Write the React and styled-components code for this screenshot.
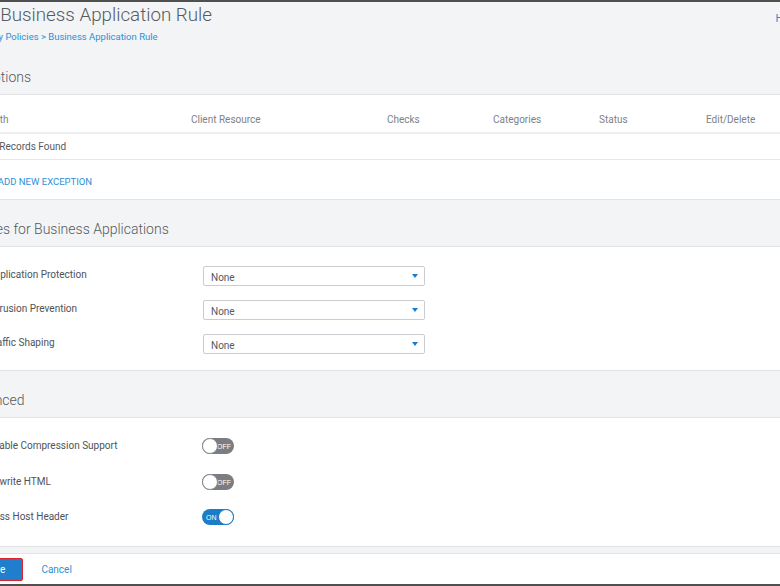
import React from "react";
import styled, { createGlobalStyle } from "styled-components";

const GlobalStyle = createGlobalStyle`
  html, body {
    margin: 0;
    padding: 0;
    background: #f3f4f6;
    font-family: Roboto, "Liberation Sans", Arial, sans-serif;
  }
`;

const columns = ["Path", "Client Resource", "Checks", "Categories", "Status", "Edit/Delete"];

const profiles = ["Application Protection", "Intrusion Prevention", "Traffic Shaping"];

const advanced = [
  { label: "Enable Compression Support", on: false },
  { label: "Rewrite HTML", on: false },
  { label: "Pass Host Header", on: true },
];

function Toggle({ on }) {
  return (
    <Switch $on={on}>
      <SwitchText $on={on}>{on ? "ON" : "OFF"}</SwitchText>
      <Knob $on={on} />
    </Switch>
  );
}

export default function App() {
  return (
    <Page>
      <GlobalStyle />
      <Main>
        <Header>
          <TitleBlock>
            <Title>Add Business Application Rule</Title>
            <Crumbs>Security Policies &gt; Business Application Rule</Crumbs>
          </TitleBlock>
          <HelpLink>Help</HelpLink>
        </Header>

        <SectionHeader>Exceptions</SectionHeader>
        <Card>
          <TableRow $head>
            {columns.map((c) => (
              <Cell key={c}>{c}</Cell>
            ))}
          </TableRow>
          <TableRow>
            <Cell>No Records Found</Cell>
          </TableRow>
          <AddLink>+ ADD NEW EXCEPTION</AddLink>
        </Card>

        <SectionHeader>Profiles for Business Applications</SectionHeader>
        <FormCard>
          {profiles.map((p) => (
            <FormRow key={p}>
              <Label>{p}</Label>
              <Select>
                <span>None</span>
                <Caret />
              </Select>
            </FormRow>
          ))}
        </FormCard>

        <SectionHeader>Advanced</SectionHeader>
        <FormCard $toggles>
          {advanced.map((a) => (
            <FormRow key={a.label} $short>
              <Label $centered>{a.label}</Label>
              <Toggle on={a.on} />
            </FormRow>
          ))}
        </FormCard>

        <Footer>
          <SaveButton>Save</SaveButton>
          <CancelLink>Cancel</CancelLink>
        </Footer>
      </Main>
    </Page>
  );
}

const Page = styled.div`
  height: 586px;
  box-sizing: border-box;
  border-top: 2px solid #505050;
  border-bottom: 2px solid #505050;
  overflow: hidden;
  background: #f3f4f6;
`;

const Main = styled.div`
  margin-left: -40px;
  margin-right: -20px;
  display: flex;
  flex-direction: column;
`;

const Header = styled.div`
  display: flex;
  justify-content: space-between;
  align-items: flex-start;
  padding: 2px 2px 4px 0;
`;

const TitleBlock = styled.div`
  display: flex;
  flex-direction: column;
  gap: 4px;
`;

const Title = styled.div`
  font-size: 18.8px;
  line-height: 22px;
  font-weight: 300;
  color: #555b61;
  margin-left: 3px;
`;

const Crumbs = styled.div`
  font-size: 9.5px;
  line-height: 14px;
  color: #2d8fd5;
  margin-left: 9px;
`;

const HelpLink = styled.div`
  font-size: 11px;
  line-height: 14px;
  margin-top: 8px;
  color: #2d8fd5;
`;

const SectionHeader = styled.div`
  padding: 19px 0 7px 4px;
  font-size: 14px;
  line-height: 20px;
  font-weight: 300;
  color: #555a60;
  border-bottom: 1px solid #e1e3e6;
`;

const Card = styled.div`
  background: #fff;
  padding-left: 28px;
  border-bottom: 1px solid #e1e3e6;
`;

const TableRow = styled.div`
  display: grid;
  grid-template-columns: 203px 196px 106px 106px 107px 1fr;
  font-size: 10px;
  line-height: 14px;
  color: ${(p) => (p.$head ? "#7d8287" : "#555a5f")};
  padding: ${(p) => (p.$head ? "18px 0 5px" : "6px 0 5px")};
  border-bottom: ${(p) => (p.$head ? "2px solid #eceef0" : "1px solid #e4e6e8")};
  margin-left: -28px;
  padding-left: ${(p) => (p.$head ? "28px" : "24px")};
`;

const Cell = styled.div`
  white-space: nowrap;
`;

const AddLink = styled.div`
  font-size: 9.5px;
  line-height: 14px;
  color: #2d8fd5;
  padding: 15px 0 10px;
  margin-left: 2px;
`;

const FormCard = styled.div`
  background: #fff;
  padding: ${(p) => (p.$toggles ? "20px 0 21px 28px" : "19px 0 16px 28px")};
  border-bottom: 1px solid #e1e3e6;
  display: flex;
  flex-direction: column;
  gap: ${(p) => (p.$toggles ? "19.5px" : "14px")};
`;

const FormRow = styled.div`
  display: grid;
  grid-template-columns: ${(p) => (p.$short ? "214px" : "215px")} auto;
  align-items: center;
  height: ${(p) => (p.$short ? "16px" : "20px")};
`;

const Label = styled.div`
  font-size: 10px;
  line-height: 14px;
  color: #4e5358;
  margin-top: ${(p) => (p.$centered ? "0" : "-3px")};
  white-space: nowrap;
`;

const Select = styled.div`
  width: 222px;
  height: 20px;
  box-sizing: border-box;
  border: 1px solid #c9ccd0;
  border-radius: 2px;
  display: flex;
  align-items: center;
  justify-content: space-between;
  padding: 2px 6px 0 7px;
  font-size: 10px;
  color: #555a5f;
`;

const Caret = styled.span`
  width: 0;
  height: 0;
  border-left: 3.5px solid transparent;
  border-right: 3.5px solid transparent;
  border-top: 4px solid #1a7cc8;
  margin-top: -3px;
`;

const Switch = styled.div`
  position: relative;
  width: 32px;
  height: 16px;
  box-sizing: border-box;
  border-radius: 8px;
  background: ${(p) => (p.$on ? "#1b7dc8" : "#7b7d80")};
  display: flex;
  align-items: center;
  justify-content: ${(p) => (p.$on ? "flex-start" : "flex-end")};
  padding: 0 ${(p) => (p.$on ? "0 0 4px" : "3px 0 0")};
`;

const SwitchText = styled.span`
  font-size: 7px;
  color: #fff;
  font-family: "Liberation Sans", Arial, sans-serif;
  margin-top: 1px;
`;

const Knob = styled.span`
  position: absolute;
  top: 0;
  ${(p) => (p.$on ? "right: 0;" : "left: 0;")}
  width: 16px;
  height: 16px;
  box-sizing: border-box;
  border-radius: 50%;
  background: #fff;
  border: 1px solid ${(p) => (p.$on ? "#1b7dc8" : "#8a8c8f")};
`;

const Footer = styled.div`
  margin-top: 6px;
  border-top: 1px solid #e1e3e6;
  background: #fff;
  height: 30px;
  display: flex;
  align-items: center;
  gap: 18px;
  padding-left: 6px;
`;

const SaveButton = styled.div`
  height: 23px;
  box-sizing: border-box;
  padding: 0 17px;
  display: flex;
  align-items: center;
  background: #1f7fcc;
  border: 1.5px solid #e0232b;
  border-radius: 2px;
  color: #fff;
  font-size: 10px;
`;

const CancelLink = styled.div`
  font-size: 10px;
  color: #2d8fd5;
`;
